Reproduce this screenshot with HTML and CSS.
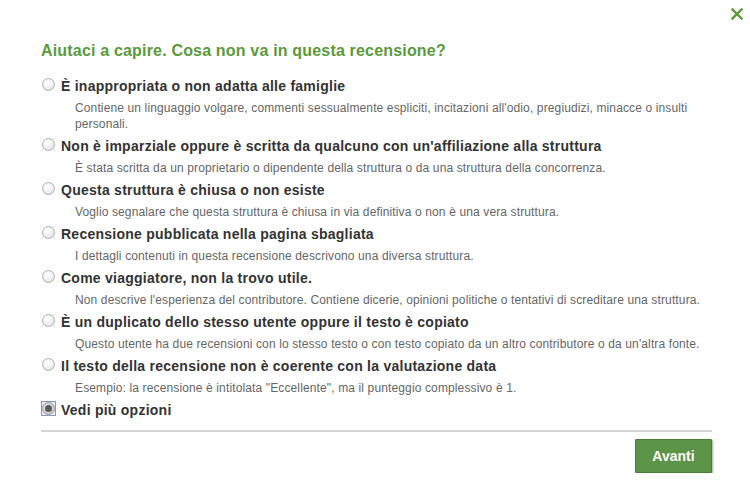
FILE: index.html
```html
<!DOCTYPE html>
<html lang="it">
<head>
<meta charset="utf-8">
<link rel="stylesheet" href="styles.css">
</head>
<body>
<div class="dialog">
  <div class="close-row">
    <svg class="close" viewBox="0 0 12 12" width="12" height="12"><path d="M1.5 1.5 L10.5 10.5 M10.5 1.5 L1.5 10.5" stroke="#5a9a3a" stroke-width="2.4" stroke-linecap="square"/></svg>
  </div>
  <h1 class="title">Aiutaci a capire. Cosa non va in questa recensione?</h1>
  <ul class="options">
    <li class="option">
      <div class="label"><span class="radio"></span>È inappropriata o non adatta alle famiglie</div>
      <div class="desc">Contiene un linguaggio volgare, commenti sessualmente espliciti, incitazioni all'odio, pregiudizi, minacce o insulti personali.</div>
    </li>
    <li class="option">
      <div class="label"><span class="radio"></span>Non è imparziale oppure è scritta da qualcuno con un'affiliazione alla struttura</div>
      <div class="desc">È stata scritta da un proprietario o dipendente della struttura o da una struttura della concorrenza.</div>
    </li>
    <li class="option">
      <div class="label"><span class="radio"></span>Questa struttura è chiusa o non esiste</div>
      <div class="desc">Voglio segnalare che questa struttura è chiusa in via definitiva o non è una vera struttura.</div>
    </li>
    <li class="option">
      <div class="label"><span class="radio"></span>Recensione pubblicata nella pagina sbagliata</div>
      <div class="desc">I dettagli contenuti in questa recensione descrivono una diversa struttura.</div>
    </li>
    <li class="option">
      <div class="label"><span class="radio"></span>Come viaggiatore, non la trovo utile.</div>
      <div class="desc">Non descrive l'esperienza del contributore. Contiene dicerie, opinioni politiche o tentativi di screditare una struttura.</div>
    </li>
    <li class="option">
      <div class="label"><span class="radio"></span>È un duplicato dello stesso utente oppure il testo è copiato</div>
      <div class="desc">Questo utente ha due recensioni con lo stesso testo o con testo copiato da un altro contributore o da un'altra fonte.</div>
    </li>
    <li class="option">
      <div class="label"><span class="radio"></span>Il testo della recensione non è coerente con la valutazione data</div>
      <div class="desc">Esempio: la recensione è intitolata "Eccellente", ma il punteggio complessivo è 1.</div>
    </li>
    <li class="option">
      <div class="label"><span class="focus-box"><span class="radio checked"></span></span>Vedi più opzioni</div>
    </li>
  </ul>
  <div class="footer">
    <button class="next">Avanti</button>
  </div>
</div>
</body>
</html>
```
FILE: styles.css
```css
html, body {
  margin: 0;
  padding: 0;
  background: #fff;
}
body {
  font-family: "Liberation Sans", Arial, sans-serif;
  color: #333;
}
.dialog {
  width: 671px;
  padding: 0 38px 0 41px;
}
.close-row {
  display: flex;
  justify-content: flex-end;
  height: 20px;
  padding-top: 8px;
  margin-right: -31px;
}
.close {
  display: block;
}
.title {
  margin: 13px 0 0 0;
  font-size: 16px;
  font-weight: bold;
  color: #5a9a3a;
  line-height: 20px;
  letter-spacing: 0.18px;
}
.options {
  list-style: none;
  margin: 17px 0 0 0;
  padding: 0;
}
.option {
  margin-bottom: 6px;
}
.label {
  display: flex;
  align-items: center;
  font-size: 14px;
  font-weight: bold;
  color: #333;
  line-height: 16px;
  letter-spacing: 0.25px;
}
.radio {
  width: 11px;
  height: 11px;
  border-radius: 50%;
  border: 1px solid #b0b0b0;
  background: radial-gradient(circle at 40% 35%, #fff 0%, #f0f0f0 50%, #d6d6d6 100%);
  margin: 0 6px 0 1px;
  flex: none;
  position: relative;
  top: -2px;
}
.focus-box {
  display: flex;
  flex: none;
  width: 13px;
  height: 13px;
  border: 1px solid #7f9cc0;
  background: #e9eef5;
  margin: 0 5px 0 0;
  position: relative;
  top: -2px;
  align-items: center;
  justify-content: center;
}
.focus-box .radio {
  margin: 0;
  top: 0;
}
.radio.checked {
  background: radial-gradient(circle at 40% 35%, #e8e8e8 0%, #d0d0d0 60%, #bdbdbd 100%);
  border-color: #9a9a9a;
}
.radio.checked::after {
  content: "";
  position: absolute;
  left: 2px;
  top: 2px;
  width: 7px;
  height: 7px;
  border-radius: 50%;
  background: #5a5a5a;
}
.desc {
  margin: 6px 0 0 34px;
  font-size: 12px;
  color: #666;
  line-height: 16px;
  letter-spacing: 0.13px;
}
.footer {
  border-top: 2px solid #d5d5d5;
  margin-top: 12px;
  padding-top: 7px;
  display: flex;
  justify-content: flex-end;
}
.next {
  width: 77px;
  height: 34px;
  background: #5b9447;
  border: 1px solid #4b7d3a;
  border-radius: 1px;
  color: #fff;
  font-family: "Liberation Sans", Arial, sans-serif;
  font-size: 14px;
  font-weight: bold;
  box-shadow: 1px 1px 2px rgba(0,0,0,0.35);
  cursor: pointer;
}
```
